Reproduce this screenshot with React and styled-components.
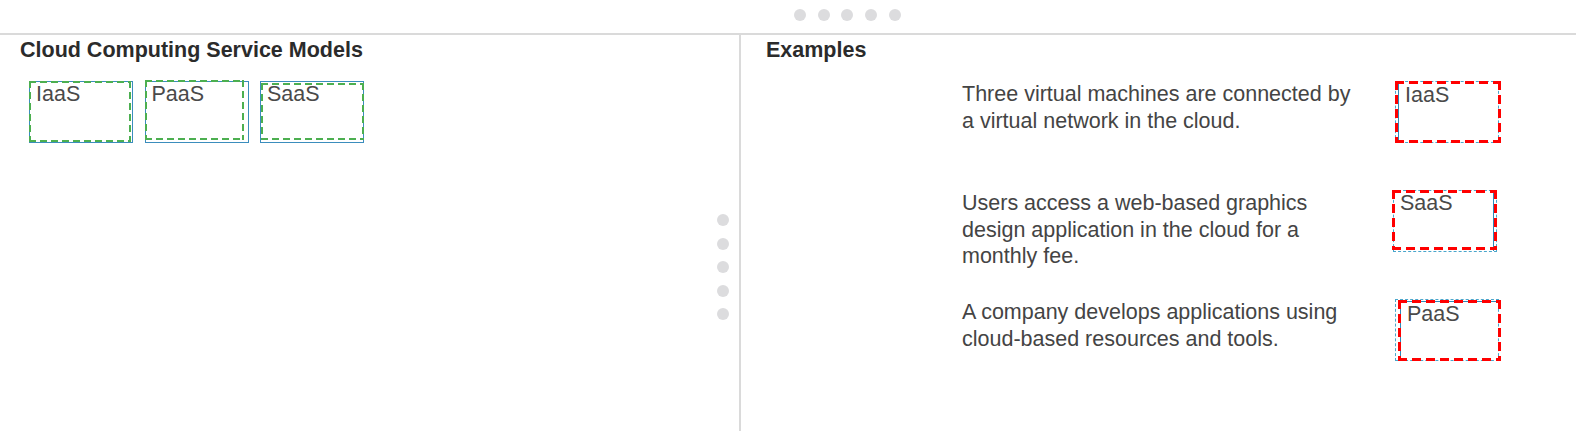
import React from 'react'
import styled, { createGlobalStyle, css } from 'styled-components'

const GlobalStyle = createGlobalStyle`
  html, body {
    margin: 0;
    padding: 0;
    background: #fff;
  }
  body {
    font-family: "Liberation Sans", Arial, sans-serif;
  }
`

// dashed outline drawn with gradients so the dash length matches the original
const dashedOutline = (color, w, dash, gap) => css`
  background:
    repeating-linear-gradient(90deg, ${color} 0 ${dash}px, transparent ${dash}px ${dash + gap}px) top left / 100% ${w}px no-repeat,
    repeating-linear-gradient(90deg, ${color} 0 ${dash}px, transparent ${dash}px ${dash + gap}px) bottom left / 100% ${w}px no-repeat,
    repeating-linear-gradient(180deg, ${color} 0 ${dash}px, transparent ${dash}px ${dash + gap}px) top left / ${w}px 100% no-repeat,
    repeating-linear-gradient(180deg, ${color} 0 ${dash}px, transparent ${dash}px ${dash + gap}px) top right / ${w}px 100% no-repeat;
`

const Page = styled.div`
  height: 100vh;
  display: flex;
  flex-direction: column;
  overflow: hidden;
`

const TopBar = styled.div`
  height: 35px;
  box-sizing: border-box;
  border-bottom: 2px solid #dadada;
  display: flex;
  align-items: flex-start;
  gap: 11.7px;
  padding: 9px 0 0 794px;
`

const Dot = styled.span`
  width: 12px;
  height: 12px;
  border-radius: 50%;
  background: #dcdcde;
  flex-shrink: 0;
`

const Main = styled.div`
  flex: 1;
  display: flex;
  min-height: 0;
`

const LeftPanel = styled.div`
  width: 739px;
  flex-shrink: 0;
  display: flex;
`

const LeftContent = styled.div`
  flex: 1;
  padding: 2.5px 0 0 20px;
`

const Grip = styled.div`
  display: flex;
  flex-direction: column;
  gap: 11.6px;
  padding-top: 179px;
  margin-right: 10.5px;
`

const RightPanel = styled.div`
  flex: 1;
  border-left: 2px solid #dadada;
  padding: 2.5px 0 0 25px;
`

const Heading = styled.h2`
  margin: 0;
  font-size: 21.5px;
  line-height: 25px;
  font-weight: bold;
  color: #2b2b2b;
`

const ChipRow = styled.div`
  display: flex;
  gap: 11.5px;
  margin: 18.5px 0 0 9px;
`

const Chip = styled.div`
  position: relative;
  width: 104px;
  height: 62px;
  box-sizing: border-box;
  border: 1px solid #3b8dbd;
  padding: 0 6px;
  font-size: 21.5px;
  line-height: 25px;
  color: #4a4a4a;

  &::after {
    content: '';
    position: absolute;
    top: ${p => p.$o[0]}px;
    right: ${p => p.$o[1]}px;
    bottom: ${p => p.$o[2]}px;
    left: ${p => p.$o[3]}px;
    ${dashedOutline('#4caf50', 2, 7, 4)}
  }
`

const Rows = styled.div`
  margin: 18.5px 0 0 196px;
`

const Row = styled.div`
  display: flex;
  align-items: flex-start;
  height: 109px;
`

const Description = styled.p`
  margin: 0;
  width: 405px;
  font-size: 21.5px;
  line-height: 26.7px;
  color: #444;
`

const Zone = styled.div`
  position: relative;
  display: flex;
  width: 104px;
  height: 62px;
  box-sizing: border-box;
  margin-left: ${p => p.$dx}px;
  border: 1px dashed #4aa6cc;

  &::after {
    content: '';
    position: absolute;
    top: ${p => p.$o[0]}px;
    right: ${p => p.$o[1]}px;
    bottom: ${p => p.$o[2]}px;
    left: ${p => p.$o[3]}px;
    ${dashedOutline('#ff0000', 3, 9, 5)}
  }
`

const Placed = styled.div`
  flex: 1;
  box-sizing: border-box;
  margin: ${p => p.$m};
  padding: ${p => p.$pt}px 0 0 6px;
  border-style: solid;
  border-color: #2f88b8;
  border-width: ${p => p.$bw};
  font-size: 21.5px;
  line-height: 25px;
  color: #4a4a4a;
`

const models = [
  { label: 'IaaS', o: [-1, 1, 0, -1] },
  { label: 'PaaS', o: [-2, 4, 2, -1] },
  { label: 'SaaS', o: [1, -1, 2, 0] },
]

const examples = [
  {
    text: 'Three virtual machines are connected by a virtual network in the cloud.',
    answer: 'IaaS',
    dx: 28,
    o: [-1, -3, -1, -1],
    m: '0 0 0 2px',
    bw: '0 0 0 1px',
    pt: 1,
  },
  {
    text: 'Users access a web-based graphics design application in the cloud for a monthly fee.',
    answer: 'SaaS',
    dx: 26,
    o: [-1, -1, 1, -2],
    m: '0 2px 0 0',
    bw: '0 1px 0 0',
    pt: 0,
  },
  {
    text: 'A company develops applications using cloud-based resources and tools.',
    answer: 'PaaS',
    dx: 28,
    o: [0, -3, -1, 2],
    m: '1px 0 0 4px',
    bw: '1px 0 0 1px',
    pt: 0,
  },
]

const App = () => (
  <Page>
    <GlobalStyle />
    <TopBar>
      {[0, 1, 2, 3, 4].map(i => <Dot key={i} />)}
    </TopBar>
    <Main>
      <LeftPanel>
        <LeftContent>
          <Heading>Cloud Computing Service Models</Heading>
          <ChipRow>
            {models.map(m => (
              <Chip key={m.label} $o={m.o}>{m.label}</Chip>
            ))}
          </ChipRow>
        </LeftContent>
        <Grip>
          {[0, 1, 2, 3, 4].map(i => <Dot key={i} />)}
        </Grip>
      </LeftPanel>
      <RightPanel>
        <Heading>Examples</Heading>
        <Rows>
          {examples.map(ex => (
            <Row key={ex.answer}>
              <Description>{ex.text}</Description>
              <Zone $dx={ex.dx} $o={ex.o}>
                <Placed $m={ex.m} $bw={ex.bw} $pt={ex.pt}>{ex.answer}</Placed>
              </Zone>
            </Row>
          ))}
        </Rows>
      </RightPanel>
    </Main>
  </Page>
)

export default App
